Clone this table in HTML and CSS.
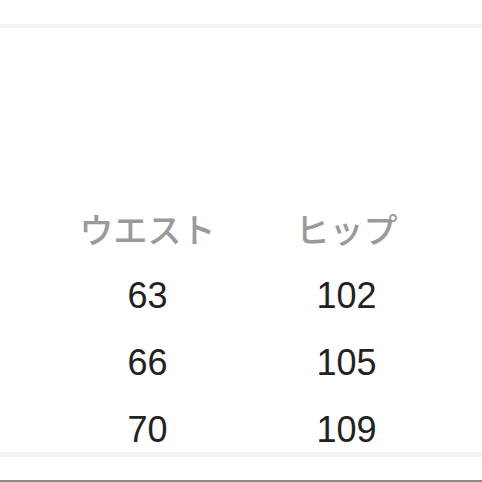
FILE: index.html
```html
<!DOCTYPE html>
<html lang="ja">
<head>
<meta charset="utf-8">
<link rel="stylesheet" href="styles.css">
</head>
<body>
<div class="page">
  <div class="gap-top"></div>
  <div class="band"></div>
  <div class="content">
    <div class="table">
      <div class="cell head">ウエスト</div>
      <div class="cell head">ヒップ</div>
      <div class="cell num">63</div>
      <div class="cell num">102</div>
      <div class="cell num">66</div>
      <div class="cell num">105</div>
      <div class="cell num">70</div>
      <div class="cell num">109</div>
    </div>
  </div>
  <div class="band band-bottom"></div>
  <div class="footer"></div>
</div>
</body>
</html>
```

FILE: styles.css
```css
* { box-sizing: border-box; }
html, body { margin: 0; padding: 0; background: #fff; }
.page {
  width: 482px;
  height: 482px;
  display: flex;
  flex-direction: column;
  overflow: hidden;
  font-family: "Liberation Sans", "Noto Sans CJK JP", sans-serif;
}
.gap-top { height: 24px; background: #fff; }
.band { height: 4px; background: #f5f5f5; position: relative; z-index: 1; }
.content {
  height: 424px;
  padding-top: 167px;
  padding-left: 48px;
}
.table {
  display: grid;
  grid-template-columns: 199px 199px;
  grid-auto-rows: 67px;
}
.cell {
  display: flex;
  align-items: center;
  justify-content: center;
}
.head {
  font-size: 34px;
  color: #9a9a9a;
  font-family: "Noto Sans CJK JP", sans-serif;
  font-weight: 500;
}
.num {
  font-size: 36px;
  color: #222;
}
.band-bottom { height: 5px; background: #f3f3f3; }
.footer {
  flex: 1;
  background: #fff;
  position: relative;
  z-index: 1;
  border-bottom: 2px solid #8a8a8a;
}
```
